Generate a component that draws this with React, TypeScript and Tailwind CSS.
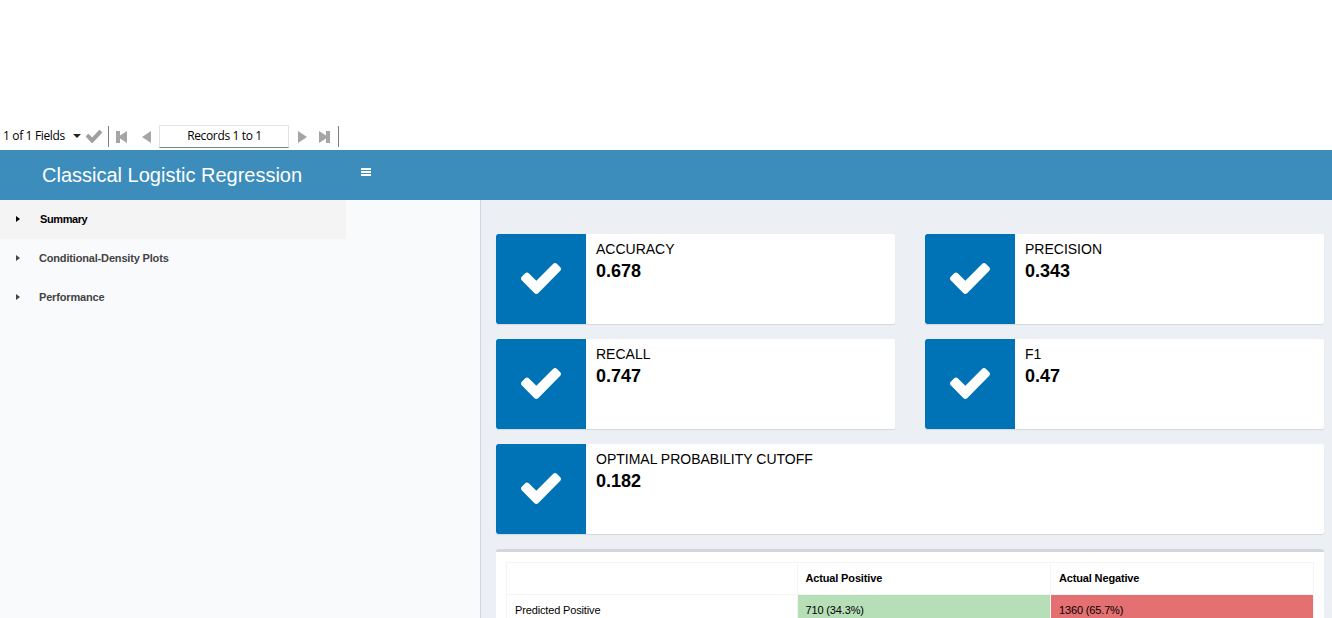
const CHECK =
  "M1671 566q0 40-28 68l-724 724-136 136q-28 28-68 28t-68-28l-136-136-362-362q-28-28-28-68t28-68l136-136q28-28 68-28t68 28l294 295 656-657q28-28 68-28t68 28l136 136q28 28 28 68z";

function Check({ className }: { className: string }) {
  return (
    <svg viewBox="121 334 1550 1188" preserveAspectRatio="none" className={className} fill="currentColor">
      <path d={CHECK} />
    </svg>
  );
}

function InfoBox({ label, value, wide }: { label: string; value: string; wide?: boolean }) {
  return (
    <div
      className={`flex h-[90px] overflow-clip rounded-[2px] bg-white shadow-[0_1px_1px_rgba(0,0,0,0.1)] ${wide ? "col-span-2" : ""}`}
    >
      <div className="flex w-[90px] shrink-0 items-start justify-center rounded-l-[2px] bg-[#0073b7] pt-[29px] text-white">
        <Check className="h-[31px] w-[40px]" />
      </div>
      <div className="px-[10px] pt-[5px] text-black">
        <div className="text-[14px] leading-[20px]">{label}</div>
        <div className="text-[18px] leading-[25px] font-bold">{value}</div>
      </div>
    </div>
  );
}

function MenuItem({ label, active }: { label: string; active?: boolean }) {
  return (
    <div
      className={`flex h-[39px] w-[346px] items-start pt-[11px] pl-[16px] text-[11px] leading-[16px] font-bold ${
        active ? "bg-[#f4f4f4] tracking-[-0.4px] text-black" : "tracking-[-0.17px] text-[#444444]"
      }`}
    >
      <svg viewBox="0 0 4 6" className={`mt-[5px] h-[6px] w-[4px] ${active ? "mr-[20px]" : "mr-[19px]"}`} fill="currentColor">
        <path d="M0 0 L4 3 L0 6Z" />
      </svg>
      {label}
    </div>
  );
}

function Toolbar() {
  return (
    <div className="flex h-[27px] items-start bg-white pt-[3px] font-['Open_Sans',sans-serif] text-[12px] text-black">
      <div className="w-[70px] pl-[3px] leading-[19px] tracking-[-0.35px] whitespace-nowrap">1 of 1 Fields</div>
      <svg viewBox="0 0 8 4" className="mt-[8px] ml-[3px] h-[4px] w-[8px]" fill="#222222">
        <path d="M0 0H8L4 4Z" />
      </svg>
      <Check className="mt-[4px] ml-[5px] h-[13px] w-[16px] text-[#a0a0a0]" />
      <div className="mt-0 ml-[6px] h-[21px] w-px bg-[#808080]" />
      <svg viewBox="0 0 11 12" className="mt-[5px] ml-[7px] h-[12px] w-[11px]" fill="#a5a5a5">
        <path d="M0 0H4V4.5L11 0V12L4 7.5V12H0Z" />
      </svg>
      <svg viewBox="0 0 9 12" className="mt-[5px] ml-[15px] h-[12px] w-[9px]" fill="#a5a5a5">
        <path d="M9 0V12L0 6Z" />
      </svg>
      <div className="-mt-px ml-[8px] h-[23px] w-[130px] border border-[#e3e3e3] border-b-[#808080] pl-px text-center leading-[19px] tracking-[-0.35px]">
        Records 1 to 1
      </div>
      <svg viewBox="0 0 9 12" className="mt-[5px] ml-[9px] h-[12px] w-[9px]" fill="#a5a5a5">
        <path d="M0 0V12L9 6Z" />
      </svg>
      <svg viewBox="0 0 11 12" className="mt-[5px] ml-[12px] h-[12px] w-[11px]" fill="#a5a5a5">
        <path d="M11 0H7V4.5L0 0V12L7 7.5V12H11Z" />
      </svg>
      <div className="ml-[8px] h-[21px] w-px bg-[#808080]" />
    </div>
  );
}

export default function App() {
  return (
    <div className="flex h-[618px] w-[1332px] flex-col overflow-hidden bg-white pt-[123px] font-['Liberation_Sans',Arial,sans-serif]">
      <Toolbar />
      <header className="flex h-[50px] shrink-0 bg-[#3c8dbc] text-white">
        <h1 className="w-[346px] pl-[42px] text-[20px] leading-[50px] whitespace-nowrap">Classical Logistic Regression</h1>
        <svg viewBox="0 0 10 8" className="mt-[18px] ml-[15px] h-[8px] w-[10px]" fill="currentColor">
          <path d="M0 0H10V2H0ZM0 3H10V5H0ZM0 6H10V8H0Z" />
        </svg>
      </header>
      <div className="flex h-[418px]">
        <nav className="w-[481px] shrink-0 border-r border-[#d2d6de] bg-[#f9fafc]">
          <MenuItem label="Summary" active />
          <MenuItem label="Conditional-Density Plots" />
          <MenuItem label="Performance" />
        </nav>
        <main className="h-[418px] flex-1 overflow-hidden bg-[#ecf0f5] pt-[34px] pr-[8px] pl-[15px]">
          <div className="grid grid-cols-2 gap-x-[30px] gap-y-[15px]">
            <InfoBox label="ACCURACY" value="0.678" />
            <InfoBox label="PRECISION" value="0.343" />
            <InfoBox label="RECALL" value="0.747" />
            <InfoBox label="F1" value="0.47" />
            <InfoBox label="OPTIMAL PROBABILITY CUTOFF" value="0.182" wide />
          </div>
          <div className="mt-[15px] h-[120px] rounded-[3px] border-t-[3px] border-[#d2d6de] bg-white p-[10px]">
            <table className="w-[807px] table-fixed border-collapse text-left text-[11px] leading-[16px] tracking-[-0.15px] text-black">
              <colgroup>
                <col className="w-[291px]" />
                <col className="w-[253px]" />
                <col className="w-[263px]" />
              </colgroup>
              <tbody>
                <tr className="h-[32px]">
                  <th className="border border-[#f4f4f4] px-[8px]"></th>
                  <th className="border border-[#f4f4f4] px-[7.5px] pb-[2px]">Actual Positive</th>
                  <th className="border border-[#f4f4f4] px-[8px] pb-[2px]">Actual Negative</th>
                </tr>
                <tr className="h-[32px]">
                  <td className="border border-[#f4f4f4] px-[8px] pb-[2px]">Predicted Positive</td>
                  <td className="border border-[#f4f4f4] bg-[#b6dfb7] px-[7.5px] pb-[2px]">710 (34.3%)</td>
                  <td className="border border-[#f4f4f4] bg-[#e57072] px-[8px] pb-[2px]">1360 (65.7%)</td>
                </tr>
              </tbody>
            </table>
          </div>
        </main>
      </div>
    </div>
  );
}
